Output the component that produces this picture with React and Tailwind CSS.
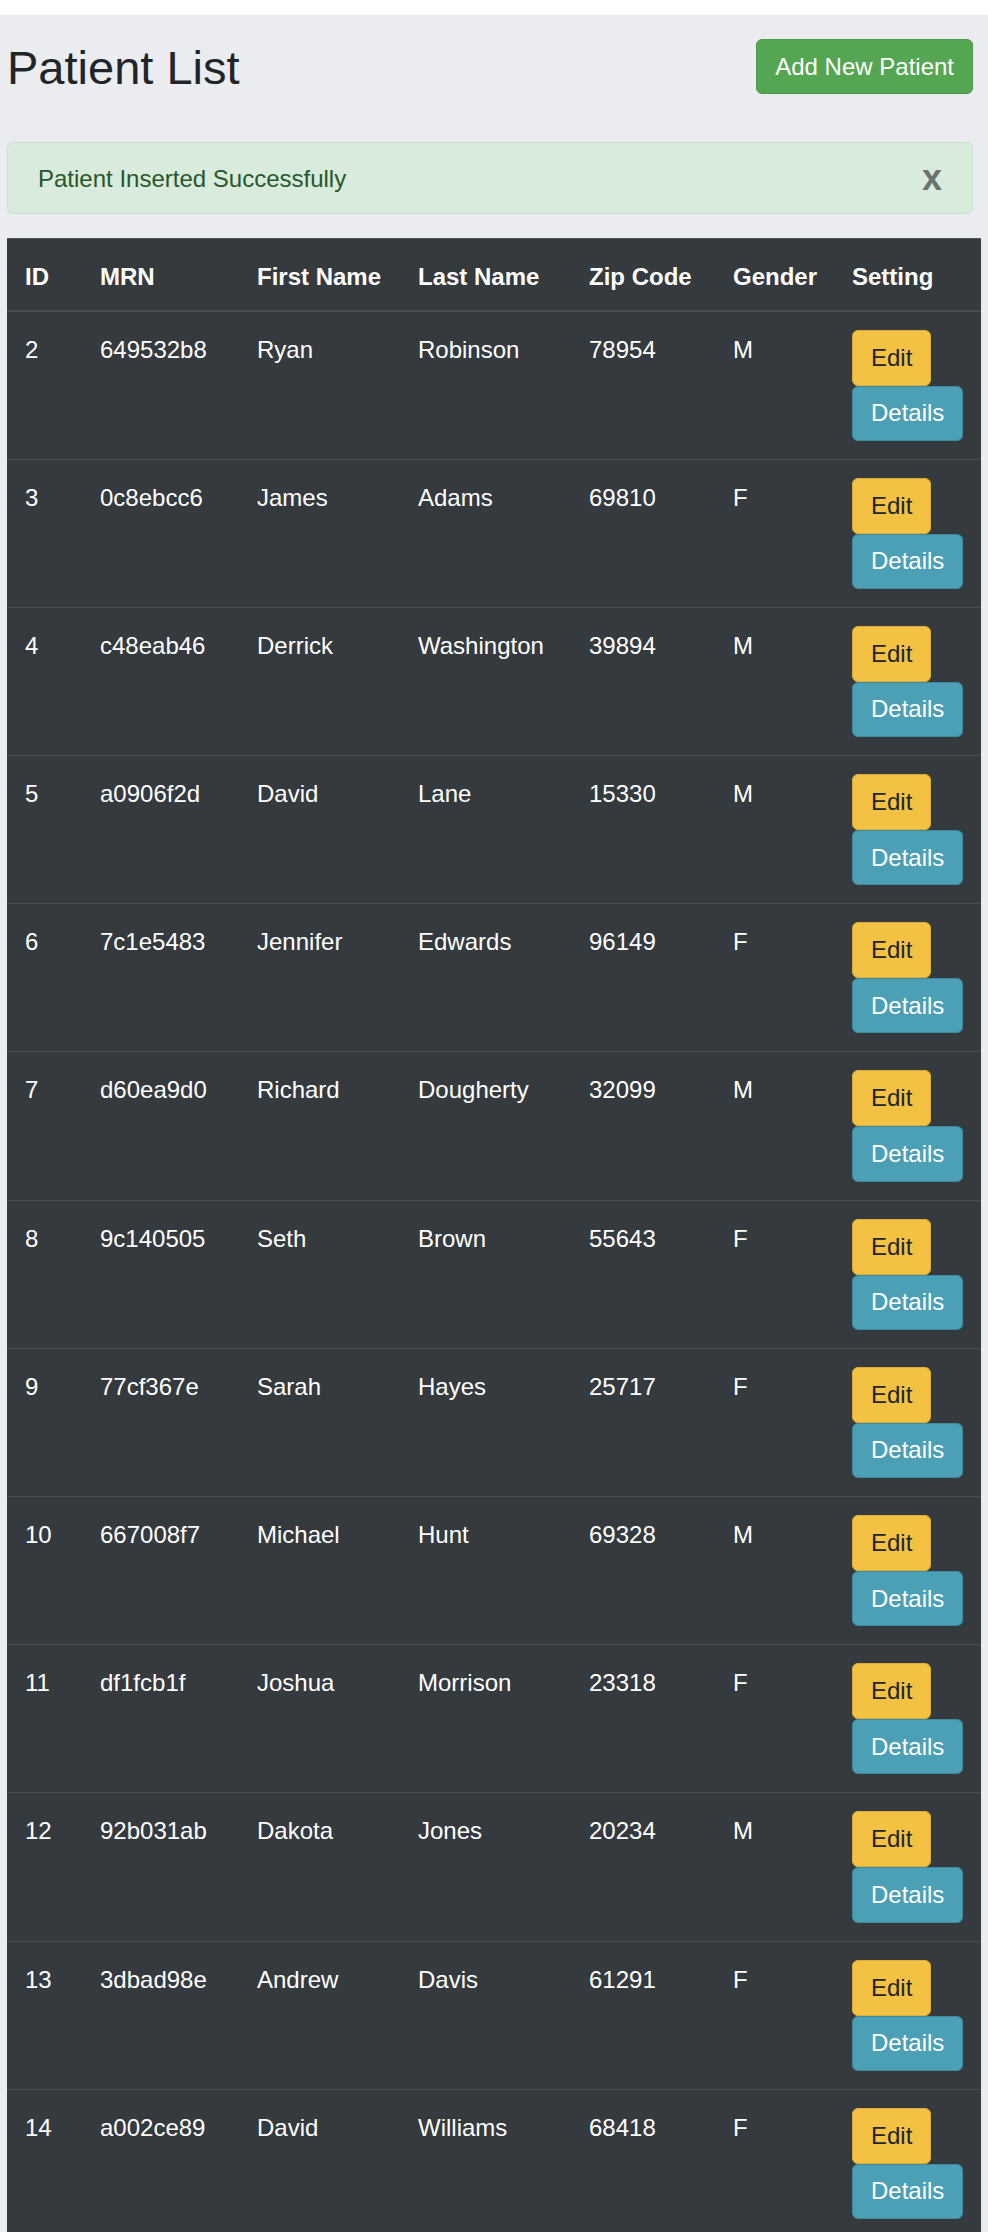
import React from 'react';

const patients = [
  { id: 2, mrn: '649532b8', first: 'Ryan', last: 'Robinson', zip: '78954', gender: 'M' },
  { id: 3, mrn: '0c8ebcc6', first: 'James', last: 'Adams', zip: '69810', gender: 'F' },
  { id: 4, mrn: 'c48eab46', first: 'Derrick', last: 'Washington', zip: '39894', gender: 'M' },
  { id: 5, mrn: 'a0906f2d', first: 'David', last: 'Lane', zip: '15330', gender: 'M' },
  { id: 6, mrn: '7c1e5483', first: 'Jennifer', last: 'Edwards', zip: '96149', gender: 'F' },
  { id: 7, mrn: 'd60ea9d0', first: 'Richard', last: 'Dougherty', zip: '32099', gender: 'M' },
  { id: 8, mrn: '9c140505', first: 'Seth', last: 'Brown', zip: '55643', gender: 'F' },
  { id: 9, mrn: '77cf367e', first: 'Sarah', last: 'Hayes', zip: '25717', gender: 'F' },
  { id: 10, mrn: '667008f7', first: 'Michael', last: 'Hunt', zip: '69328', gender: 'M' },
  { id: 11, mrn: 'df1fcb1f', first: 'Joshua', last: 'Morrison', zip: '23318', gender: 'F' },
  { id: 12, mrn: '92b031ab', first: 'Dakota', last: 'Jones', zip: '20234', gender: 'M' },
  { id: 13, mrn: '3dbad98e', first: 'Andrew', last: 'Davis', zip: '61291', gender: 'F' },
  { id: 14, mrn: 'a002ce89', first: 'David', last: 'Williams', zip: '68418', gender: 'F' },
];

const headers = ['ID', 'MRN', 'First Name', 'Last Name', 'Zip Code', 'Gender', 'Setting'];
const colWidths = ['w-[75px]', 'w-[157px]', 'w-[161px]', 'w-[171px]', 'w-[144px]', 'w-[119px]', 'w-[147px]'];

function Cell({ children }) {
  return <td className="align-top pl-[18px] pr-[10px] pt-[20px] text-[24px] leading-[36px]">{children}</td>;
}

export default function App() {
  return (
    <div className="min-h-screen bg-[#ebecf0] font-['Liberation_Sans',Arial,sans-serif] text-[#212529]">
      <div className="h-[15px] bg-white" />

      <div className="px-[7px] pt-[24px]">
        <div className="w-[966px]">
          <div className="flex items-start justify-between">
            <h1 className="text-[47px] leading-[56px] font-medium mt-[1px]">Patient List</h1>
            <button className="h-[55px] px-[18px] rounded-[6px] border border-[#4c9a4b] bg-[#55a653] text-white text-[24px] leading-[36px]">
              Add New Patient
            </button>
          </div>

          <div className="mt-[46px] h-[72px] flex items-center justify-between px-[30px] rounded-[6px] border border-[#c6e3cc] bg-[#d9ebdc] text-[#28572b] text-[24px] leading-[36px]">
            <span className="mt-[1px]">Patient Inserted Successfully</span>
            <span className="text-[36px] font-bold leading-none text-[#6b746c]">x</span>
          </div>
        </div>

        <table className="mt-[24px] w-[974px] table-fixed border-collapse bg-[#353a3f] text-white">
          <colgroup>
            {colWidths.map((w, i) => (
              <col key={i} className={w} />
            ))}
          </colgroup>
          <thead>
            <tr className="border-t border-[#50565c] border-b-2 border-b-[#474d53]">
              {headers.map((h) => (
                <th key={h} className="text-left font-bold pl-[18px] pt-[20px] pb-[14.5px] text-[24px] leading-[36px]">
                  {h}
                </th>
              ))}
            </tr>
          </thead>
          <tbody>
            {patients.map((p, i) => (
              <tr key={p.id} className={i === 0 ? '' : 'border-t border-[#474d53]'}>
                <Cell>{p.id}</Cell>
                <Cell>{p.mrn}</Cell>
                <Cell>{p.first}</Cell>
                <Cell>{p.last}</Cell>
                <Cell>{p.zip}</Cell>
                <Cell>{p.gender}</Cell>
                <td className="align-top pl-[18px] pt-[18px] pb-[18px]">
                  <div className="flex flex-col items-start">
                    <button className="h-[56px] px-[18px] rounded-[6px] border border-[#dcae3c] bg-[#f4c243] text-[#212529] text-[24px] leading-[36px]">
                      Edit
                    </button>
                    <button className="h-[55.2px] px-[18px] rounded-[6px] border border-[#3d8a9e] bg-[#4ba0b6] text-white text-[24px] leading-[36px]">
                      Details
                    </button>
                  </div>
                </td>
              </tr>
            ))}
          </tbody>
        </table>
      </div>
    </div>
  );
}
